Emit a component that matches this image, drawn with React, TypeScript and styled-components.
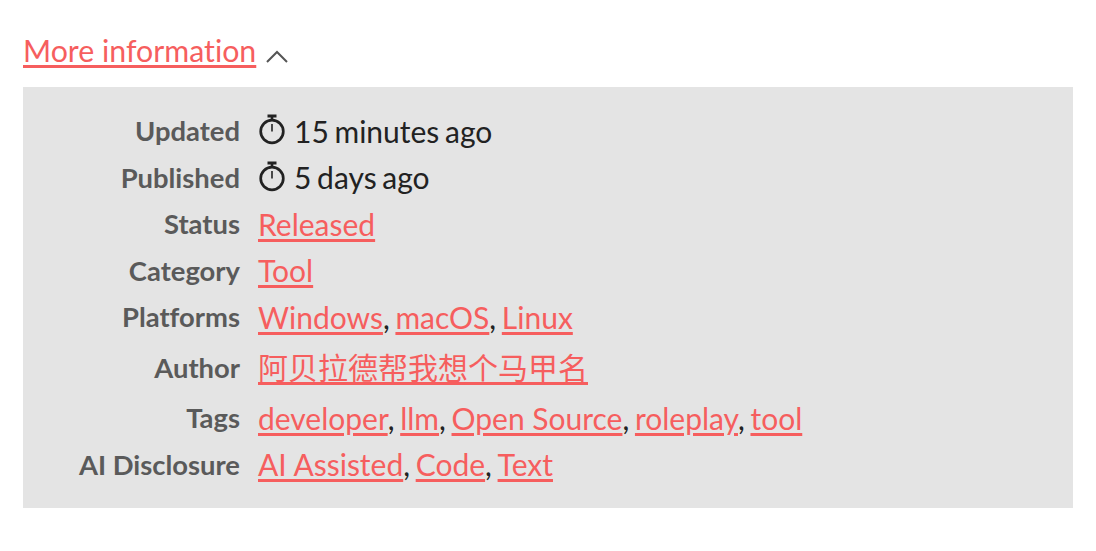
import React from 'react';
import styled, { createGlobalStyle } from 'styled-components';

const Global = createGlobalStyle`
  html, body { margin: 0; padding: 0; background: #fff; }
  body { font-family: Lato, "Noto Sans CJK SC", sans-serif; font-size: 30px; color: #222; font-variant-ligatures: none; }
`;
const Page = styled.div`
  padding: 31px 23px 0;
  width: 1050px;
`;
const Toggle = styled.div`
  display: flex;
  align-items: center;
  gap: 10px;
  height: 40px;
  margin-bottom: 16px;
`;
const Link = styled.a`
  color: #f65e5e;
  text-decoration: underline;
  text-decoration-thickness: 3px;
  text-underline-offset: 3px;
  text-decoration-skip-ink: auto;
`;
const ToggleLink = styled(Link)`
  position: relative;
  top: -1px;
  font-size: 30.3px;
`;
const Chevron = styled.svg`
  margin-top: 12px;
  flex: none;
`;
const Panel = styled.div`
  background: #e4e4e4;
  padding: 21px 0 20px;
  display: grid;
  grid-template-columns: 217px 1fr;
  column-gap: 18px;
  align-items: center;
`;
const Label = styled.div<{ $h: number }>`
  text-align: right;
  font-weight: 700;
  font-size: 27.4px;
  color: #5a5a5a;
  height: ${p => p.$h}px;
  line-height: ${p => p.$h}px;
`;
const Value = styled.div<{ $h: number }>`
  height: ${p => p.$h}px;
  line-height: ${p => p.$h}px;
  white-space: nowrap;
  display: flex;
  align-items: center;
`;
const Inline = styled.span`
  white-space: pre;
`;
const Sep = styled.span`
  margin-right: -2px;
`;
const Since = styled.span`
  word-spacing: -2px;
`;
const ClockIcon = styled.svg`
  flex: none;
  margin-right: 8px;
  margin-top: -4px;
`;
const Clock = () => (
  <ClockIcon width="28" height="32" viewBox="0 0 28 32" fill="none" stroke="#222">
    <circle cx="14" cy="18.5" r="11.3" strokeWidth="2.7" />
    <path d="M14 18.5V11" strokeWidth="1.6" />
    <path d="M14 7V4" strokeWidth="2.6" />
    <path d="M9.5 3h9" strokeWidth="3" />
  </ClockIcon>
);
type Row = { label: string; h: number; clock?: string; links?: string[] };
const rows: Row[] = [
  { label: 'Updated', h: 46, clock: '15 minutes ago' },
  { label: 'Published', h: 47, clock: '5 days ago' },
  { label: 'Status', h: 46, links: ['Released'] },
  { label: 'Category', h: 47, links: ['Tool'] },
  { label: 'Platforms', h: 46, links: ['Windows', 'macOS', 'Linux'] },
  { label: 'Author', h: 55, links: ['阿贝拉德帮我想个马甲名'] },
  { label: 'Tags', h: 46, links: ['developer', 'llm', 'Open Source', 'roleplay', 'tool'] },
  { label: 'AI Disclosure', h: 47, links: ['AI Assisted', 'Code', 'Text'] },
];
export default function App() {
  return (
    <Page>
      <Global />
      <Toggle>
        <ToggleLink href="#">More information</ToggleLink>
        <Chevron width="22" height="14" viewBox="0 0 22 14" fill="none" stroke="#555" strokeWidth="2"><path d="M1 12L11 2l10 10" /></Chevron>
      </Toggle>
      <Panel>
        {rows.map(r => (
          <React.Fragment key={r.label}>
            <Label $h={r.h}>{r.label}</Label>
            <Value $h={r.h}>
              {r.clock ? (<><Clock /><Since>{r.clock}</Since></>) : (
                <Inline>
                  {r.links!.map((l, i) => (
                    <React.Fragment key={l}>{i > 0 && <Sep>, </Sep>}<Link href="#">{l}</Link></React.Fragment>
                  ))}
                </Inline>
              )}
            </Value>
          </React.Fragment>
        ))}
      </Panel>
    </Page>
  );
}
